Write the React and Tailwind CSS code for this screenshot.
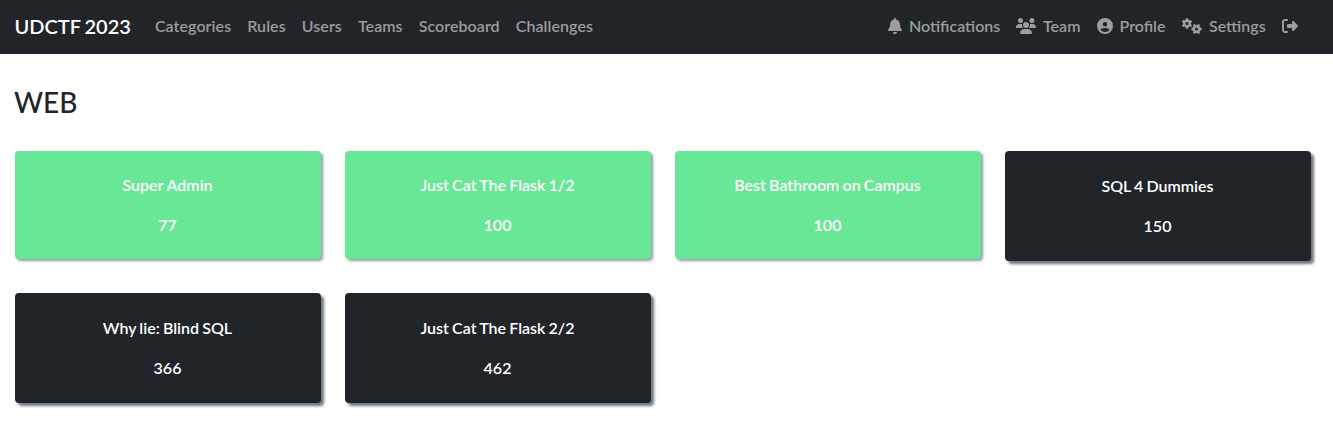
import React from "react";
import { FaBell, FaUsers, FaCircleUser, FaGears, FaRightFromBracket } from "react-icons/fa6";

const links = ["Categories", "Rules", "Users", "Teams", "Scoreboard", "Challenges"];
const tools = [
  { label: "Notifications", Icon: FaBell, size: "h-4 w-[14px]", width: "w-[112px]" },
  { label: "Team", Icon: FaUsers, size: "h-4 w-5", width: "w-[64.5px]" },
  { label: "Profile", Icon: FaCircleUser, size: "h-4 w-4", width: "w-[69.5px]" },
  { label: "Settings", Icon: FaGears, size: "h-4 w-5", width: "w-[84px]" },
];
const challenges = [
  { name: "Super Admin", points: 77, solved: true, spacing: "[word-spacing:0px]" },
  { name: "Just Cat The Flask 1/2", points: 100, solved: true },
  { name: "Best Bathroom on Campus", points: 100, solved: true },
  { name: "SQL 4 Dummies", points: 150, solved: false },
  { name: "Why lie: Blind SQL", points: 366, solved: false },
  { name: "Just Cat The Flask 2/2", points: 462, solved: false },
];

function Challenge({ name, points, solved, spacing = "[word-spacing:-0.8px]" }) {
  return (
    <button
      className={
        "flex flex-col items-center gap-4 rounded pr-px text-base leading-6 font-semibold text-white " +
        (solved
          ? "h-[108px] bg-[#68e796] pt-[22px] shadow-[2px_2px_3px_#6c757dbb]"
          : "h-[110px] bg-[#212529] pt-[23px] shadow-[3px_3px_3px_#6c757d]")
      }
    >
      <span className={spacing}>{name}</span>
      <span>{points}</span>
    </button>
  );
}

export default function App() {
  return (
    <div className="h-[430px] overflow-hidden bg-white font-['Lato',sans-serif] text-[#212529]">
      <nav className="flex h-[54px] items-center bg-[#212529] pr-[35px] pl-[14.5px] text-base font-semibold text-[#9b9d9e]">
        <span className="mr-6 pb-0.5 text-xl whitespace-nowrap text-white [word-spacing:-1px]">UDCTF 2023</span>
        <div className="flex gap-4 pb-0.5 tracking-[0.07px]">
          {links.map((l) => <a key={l}>{l}</a>)}
        </div>
        <div className="ml-auto flex items-center gap-4 pb-0.5">
          {tools.map(({ label, Icon, size, width }) => (
            <a key={label} className={"flex items-center gap-[7px] whitespace-nowrap " + width}>
              <Icon className={size + " shrink-0"} />
              {label}
            </a>
          ))}
          <FaRightFromBracket className="h-4 w-4" />
        </div>
      </nav>
      <main className="px-[15px] pt-[31px]">
        <h3 className="-ml-px text-[28px] leading-[34px] font-medium">WEB</h3>
        <div className="mt-8 grid w-[1296px] grid-cols-4 items-start gap-x-6 gap-y-8">
          {challenges.map((c) => <Challenge key={c.name} {...c} />)}
        </div>
      </main>
    </div>
  );
}
